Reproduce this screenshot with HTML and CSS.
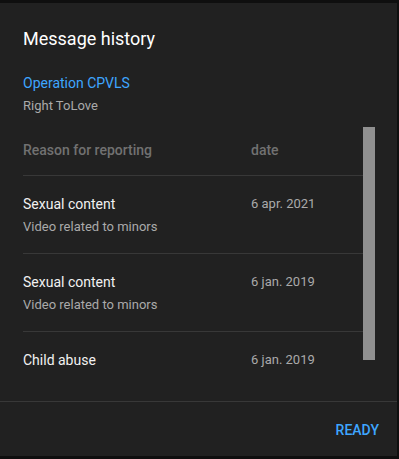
FILE: index.html
```html
<!doctype html>
<html lang="en">
<head>
    <meta charset="UTF-8">
    <meta name="viewport" content="width=device-width, initial-scale=1.0">
    <title>Message history</title>
    <link rel="stylesheet" href="styles.css">
</head>
<body>
<div class="page">
    <div class="dialog">
        <div class="head">
            <h2 class="title">Message history</h2>
            <a href="javascript:;" class="channel">Operation CPVLS</a>
            <div class="video">Right ToLove</div>
        </div>

        <div class="scroller">
            <div class="list">
                <div class="row header">
                    <div class="reason">Reason for reporting</div>
                    <div class="date">date</div>
                </div>
                <div class="row">
                    <div class="reason">
                        <div class="name">Sexual content</div>
                        <div class="sub">Video related to minors</div>
                    </div>
                    <div class="date">6 apr. 2021</div>
                </div>
                <div class="row">
                    <div class="reason">
                        <div class="name">Sexual content</div>
                        <div class="sub">Video related to minors</div>
                    </div>
                    <div class="date">6 jan. 2019</div>
                </div>
                <div class="row">
                    <div class="reason">
                        <div class="name">Child abuse</div>
                    </div>
                    <div class="date">6 jan. 2019</div>
                </div>
            </div>
            <div class="track">
                <div class="thumb"></div>
            </div>
        </div>

        <div class="foot">
            <a href="javascript:;" class="ready">READY</a>
        </div>
    </div>
</div>
</body>
</html>
```

FILE: styles.css
```css
* {
    margin: 0;
    padding: 0;
    box-sizing: border-box;
}

body {
    background: #0f0f0f;
    font-family: Roboto, "Noto Sans", Arial, sans-serif;
}

.page {
    height: 459px;
    padding-top: 3px;
    overflow: hidden;
}

.dialog {
    width: 397px;
    height: 453px;
    background: #212121;
    display: flex;
    flex-direction: column;
}

.head {
    padding: 24px 23px 0;
}

.title {
    font-size: 18px;
    line-height: 24px;
    font-weight: 400;
    color: #fff;
}

.channel {
    display: block;
    margin-top: 22px;
    font-size: 14px;
    line-height: 20px;
    color: #3ea6ff;
    text-decoration: none;
}

.video {
    margin-top: 4px;
    font-size: 13px;
    line-height: 18px;
    color: #aaa;
}

/* list area is clipped, thumb drawn by hand */
.scroller {
    margin: 12px 0 0 23px;
    height: 247px;
    width: 352px;
    display: flex;
    overflow: hidden;
}

.list {
    width: 340px;
}

.row {
    display: flex;
    padding: 18px 0 17px;
    border-top: 1px solid #383838;
}

.row.header {
    border-top: none;
    padding: 13px 0 15px;
    font-size: 14px;
    line-height: 20px;
    font-weight: 500;
    color: #717171;
}

.reason {
    width: 228px;
}

.name {
    font-size: 14px;
    line-height: 20px;
    color: #f1f1f1;
}

.sub {
    margin-top: 4px;
    font-size: 13px;
    line-height: 18px;
    color: #aaa;
}

.row .date {
    font-size: 13px;
    line-height: 20px;
    color: #aaa;
}

.row.header .date {
    font-size: 14px;
    color: #717171;
}

.track {
    width: 12px;
}

.thumb {
    height: 233px;
    background: #909090;
}

.foot {
    border-top: 1px solid #383838;
    margin-top: auto;
    height: 55px;
    display: flex;
    justify-content: flex-end;
    padding: 18px 18px 0 0;
}

.ready {
    font-size: 14px;
    line-height: 20px;
    font-weight: 500;
    color: #3ea6ff;
    text-decoration: none;
}
```
